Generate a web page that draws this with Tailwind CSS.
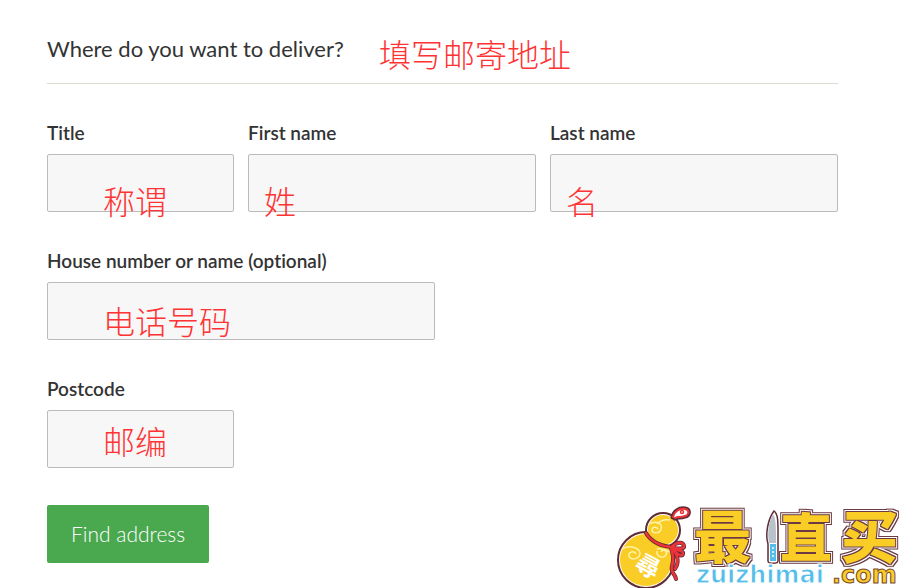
<!DOCTYPE html>
<html lang="en">
<head>
    <meta charset="UTF-8">
    <meta name="viewport" content="width=device-width, initial-scale=1.0">
    <title>Delivery address</title>
    <script src="https://cdn.jsdelivr.net/npm/@tailwindcss/browser@4"></script>
</head>
<body class="bg-white font-['Lato','Noto_Sans_CJK_SC',sans-serif] text-[#333] [font-variant-ligatures:none]">
<main class="relative min-h-screen overflow-hidden pt-[35px] pl-[47px] pr-[66px]">
    <form class="flex flex-col gap-[37px]">
        <!-- Heading -->
        <div class="relative border-b border-[#dcdcd4] pb-5">
            <h1 class="text-[22px] leading-7">Where do you want to deliver?</h1>
            <span class="absolute left-[332px] top-0 text-[32px] leading-10 font-light text-[#ff3333]">填写邮寄地址</span>
        </div>

        <!-- Name -->
        <div class="grid grid-cols-[187fr_288fr_288fr] gap-x-[14px]">
            <div class="relative flex flex-col gap-[9px]">
                <label for="title" class="text-[19px] leading-6 font-semibold">Title</label>
                <input id="title" type="text" class="h-[58px] w-full rounded-xs border border-[#bbb] bg-[#f7f7f7] px-4">
                <span class="pointer-events-none absolute left-14 top-[61px] text-[32px] leading-10 font-light text-[#ff3333]">称谓</span>
            </div>
            <div class="relative flex flex-col gap-[9px]">
                <label for="first-name" class="text-[19px] leading-6 font-semibold">First name</label>
                <input id="first-name" type="text" class="h-[58px] w-full rounded-xs border border-[#bbb] bg-[#f7f7f7] px-4">
                <span class="pointer-events-none absolute left-4 top-[61px] text-[32px] leading-10 font-light text-[#ff3333]">姓</span>
            </div>
            <div class="relative flex flex-col gap-[9px]">
                <label for="last-name" class="text-[19px] leading-6 font-semibold">Last name</label>
                <input id="last-name" type="text" class="h-[58px] w-full rounded-xs border border-[#bbb] bg-[#f7f7f7] px-4">
                <span class="pointer-events-none absolute left-4 top-[61px] text-[32px] leading-10 font-light text-[#ff3333]">名</span>
            </div>
        </div>

        <!-- House -->
        <div class="relative flex flex-col gap-[9px]">
            <label for="house" class="text-[19px] leading-6 font-semibold">House number or name (optional)</label>
            <input id="house" type="text" class="h-[58px] w-[49%] rounded-xs border border-[#bbb] bg-[#f7f7f7] px-4">
            <span class="pointer-events-none absolute left-14 top-[53px] text-[32px] leading-10 font-light text-[#ff3333]">电话号码</span>
        </div>

        <!-- Postcode -->
        <div class="relative flex flex-col gap-[9px]">
            <label for="postcode" class="text-[19px] leading-6 font-semibold">Postcode</label>
            <input id="postcode" type="text" class="h-[58px] w-[187px] rounded-xs border border-[#bbb] bg-[#f7f7f7] px-4">
            <span class="pointer-events-none absolute left-14 top-[45px] text-[32px] leading-10 font-light text-[#ff3333]">邮编</span>
        </div>

        <button type="button" class="h-[58px] self-start rounded-xs bg-[#4aa84f] px-6 text-[21px] font-light text-white">Find address</button>
    </form>

    <!-- Site logo -->
    <svg class="absolute right-0 bottom-0" width="290" height="108" viewBox="614 480 290 108" role="img" aria-label="最值买 zuizhimai.com">
        <defs>
            <!-- yellow fill, thin dark edge, white band, dark outer edge -->
            <filter id="outline" filterUnits="userSpaceOnUse" x="680" y="490" width="224" height="98" color-interpolation-filters="sRGB">
                <feMorphology in="SourceAlpha" operator="dilate" radius="1" result="a"/>
                <feMorphology in="SourceAlpha" operator="dilate" radius="2" result="b"/>
                <feMorphology in="SourceAlpha" operator="dilate" radius="3" result="c"/>
                <feFlood flood-color="#6b3a42"/>
                <feComposite in2="c" operator="in" result="outer"/>
                <feFlood flood-color="#fff"/>
                <feComposite in2="b" operator="in" result="band"/>
                <feFlood flood-color="#6b3a42"/>
                <feComposite in2="a" operator="in" result="inner"/>
                <feMerge>
                    <feMergeNode in="outer"/>
                    <feMergeNode in="band"/>
                    <feMergeNode in="inner"/>
                    <feMergeNode in="SourceGraphic"/>
                </feMerge>
            </filter>
        </defs>

        <!-- Gourd -->
        <circle cx="646" cy="560" r="28" fill="#fff" stroke="#5f2b35" stroke-width="2"/>
        <circle cx="663" cy="530" r="17" fill="#fff" stroke="#5f2b35" stroke-width="2"/>
        <circle cx="646" cy="560" r="26" fill="#facd26"/>
        <circle cx="663" cy="530" r="15" fill="#facd26"/>
        <g fill="none" stroke="#fff1a8" stroke-width="1.5">
            <path d="M622 549c7-4 17-2 18 4 0 6-9 8-11 3-1-4 5-6 7-2"/>
            <path d="M649 524c8-4 14 0 12 5-1 5-9 5-9 1 0-3 4-4 6-1M657 524c4-4 8-5 13-4"/>
            <path d="M657 551c-1 6 6 8 9 4 2-4-3-7-5-3M657 549c4-1 9 1 13 3"/>
        </g>
        <g fill="none" stroke-linecap="round">
            <path d="M673 517c1-5 6-9 12-8 5 1 4 6 0 7-5 2-7 0-10 2" stroke="#5f2b35" stroke-width="5"/>
            <path d="M673 517c1-5 6-9 12-8 5 1 4 6 0 7-5 2-7 0-10 2" fill="#fff" stroke="#ee3338" stroke-width="2"/>
            <circle cx="682" cy="512" r="1.5" stroke="#ee3338" stroke-width="1.5"/>
            <path d="M646 533c5 9 16 14 28 14M672 547c4-5 11-6 12-1 1 3-6 3-12 2 5 3 12 2 11 6-1 4-7-1-11-5M671 548c2 7 3 11 1 18s3 7 4 13M673 549c6 8 6 14 2 20" stroke="#5f2b35" stroke-width="4"/>
            <path d="M646 533c5 9 16 14 28 14M672 547c4-5 11-6 12-1 1 3-6 3-12 2 5 3 12 2 11 6-1 4-7-1-11-5M671 548c2 7 3 11 1 18s3 7 4 13M673 549c6 8 6 14 2 20" stroke="#ee3338" stroke-width="2.5"/>
        </g>
        <text x="636" y="575" transform="rotate(28 648 566)" font-family="Noto Sans CJK SC" font-size="24" font-weight="700" fill="#fff">尋</text>

        <!-- Name -->
        <g font-family="Noto Sans CJK SC" font-weight="900" fill="#facd26" filter="url(#outline)">
            <text x="694" y="558" font-size="57">最</text>
            <text x="780" y="557" font-size="52">直</text>
            <text x="841" y="558" font-size="57">买</text>
        </g>

        <!-- Knife -->
        <path d="M774 511c4 3 4 10 4 20v30c0 3-10 3-10 0v-17c-3-10 0-25 6-33z" fill="#fff" stroke="#5f2b35" stroke-width="1.5"/>
        <path d="M773 514c3 4 3 12 3 29h-7c-2-10 0-22 4-29z" fill="#b9c1cb"/>
        <path d="M770 544h6v17h-6z" fill="#55bdea"/>
        <path d="M773 547v12" stroke="#fff" stroke-width="1.5" stroke-dasharray="2 2"/>

        <text x="696" y="583" font-family="DejaVu Sans" font-size="24" font-weight="700" fill="#55bdea" stroke="#fff" stroke-width="1">zuizhimai</text>
        <text x="832" y="583" font-family="DejaVu Sans" font-size="24" font-weight="700" fill="#facd26" stroke="#7a4a30" stroke-width="1">.com</text>
    </svg>
</main>
</body>
</html>
